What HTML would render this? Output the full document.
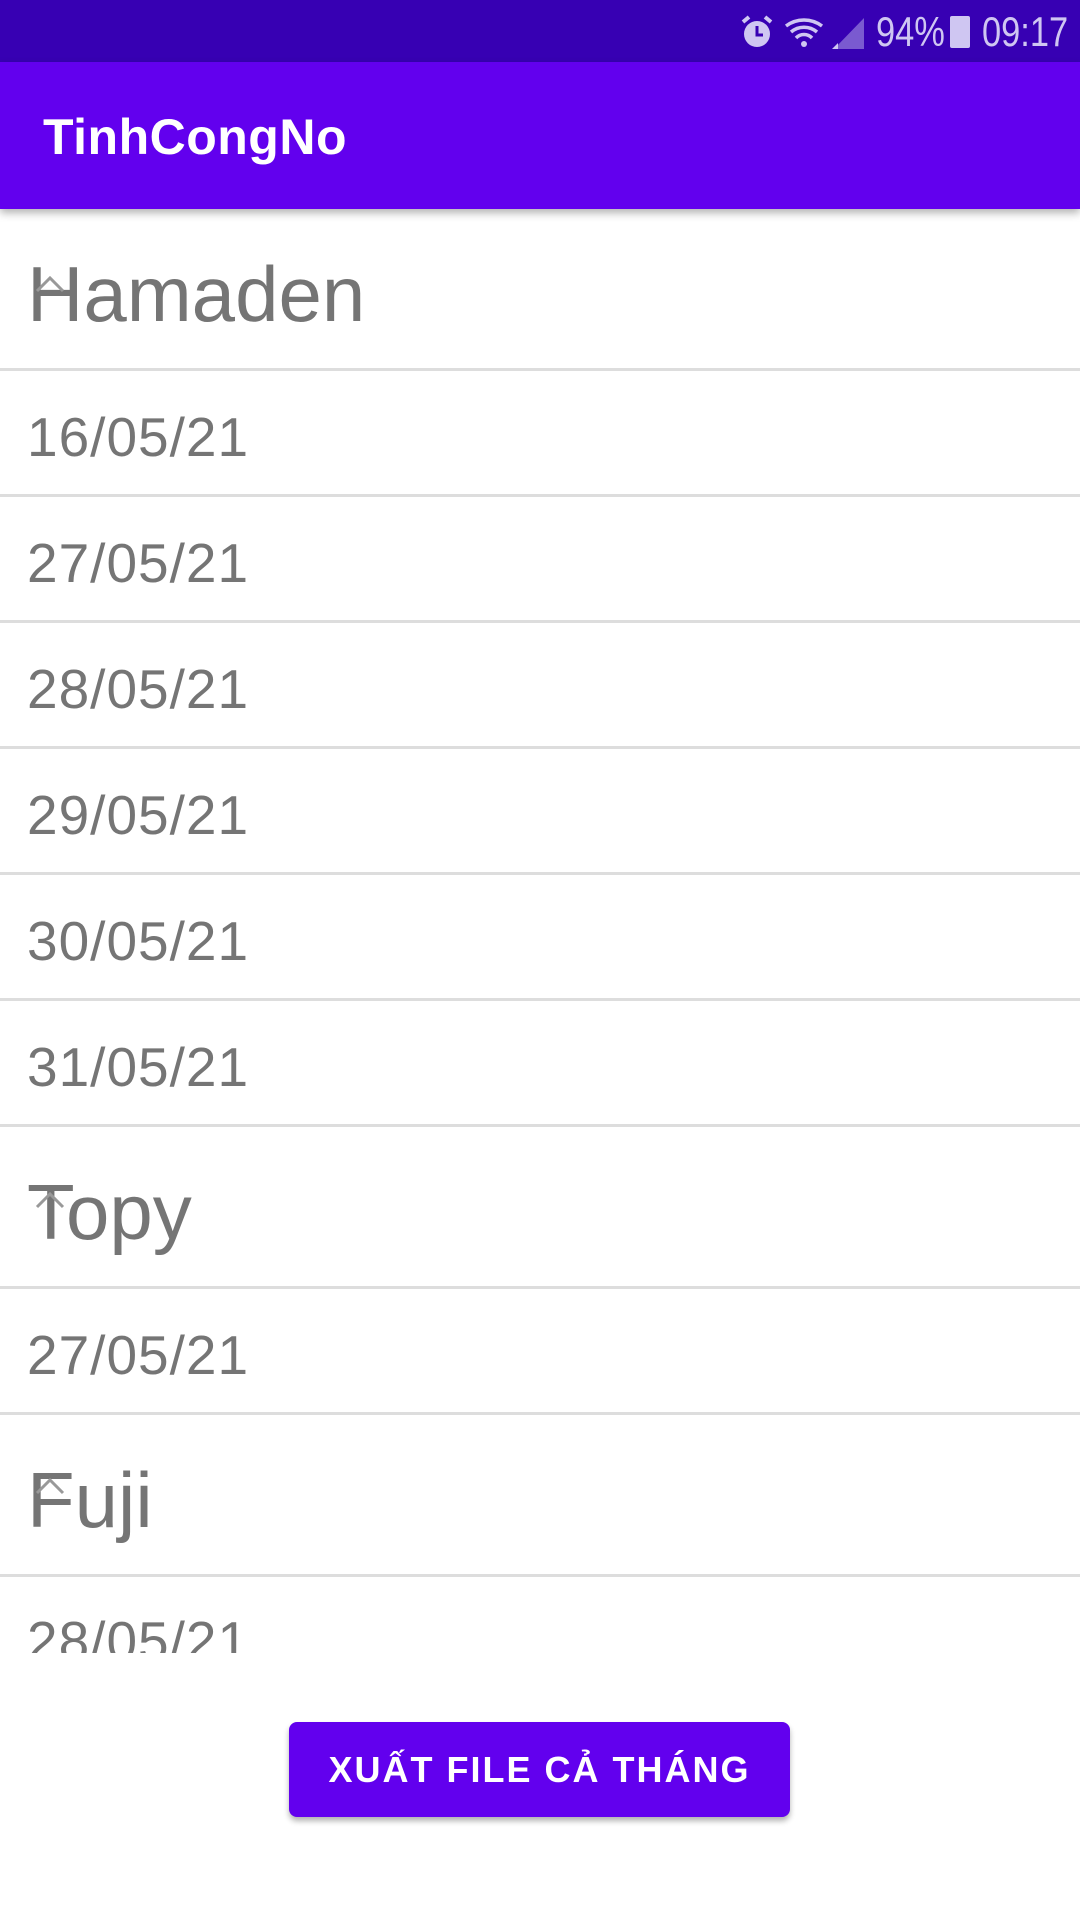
<!DOCTYPE html>
<html><head><meta charset="utf-8"><style>
*{margin:0;padding:0;box-sizing:border-box}
body{width:1080px;height:1920px;background:#fff;font-family:"Liberation Sans",sans-serif;position:relative;overflow:hidden}
.sb{position:absolute;left:0;top:0;width:1080px;height:62px;background:#3700b3}
.ab{position:absolute;left:0;top:62px;width:1080px;height:147px;background:#6200ee;box-shadow:0 4px 8px rgba(0,0,0,.3);z-index:2}
.ab span{position:absolute;left:43px;top:46px;font-size:50px;color:#fff;font-weight:bold;letter-spacing:0.5px}
.row{position:absolute;left:0;width:1080px;border-bottom:3px solid #ddd;color:#757575}
.h{height:162px}
.h span{position:absolute;left:27px;top:40px;font-size:78px}
.d{height:126px}
.d span{position:absolute;left:27px;top:34px;font-size:55px;letter-spacing:1px}
.st{position:absolute;top:8px;color:#cfc6f2;font-size:42px;transform:scaleX(.82);transform-origin:left top}
.btn{position:absolute;left:289px;top:1722px;width:501px;height:95px;background:#6200ee;border-radius:8px;box-shadow:0 4px 6px rgba(0,0,0,.3);color:#fff;font-size:36px;font-weight:bold;letter-spacing:2px;text-align:center;line-height:95px}
</style></head><body>
<div class="sb">
<svg style="position:absolute;left:740px;top:14px" width="34" height="36" viewBox="0 0 34 36"><circle cx="17" cy="20" r="13" fill="#cfc6f2"/><path d="M17 12v9h6" stroke="#3700b3" stroke-width="3" fill="none"/><path d="M3 8l6-5M31 8l-6-5" stroke="#cfc6f2" stroke-width="4"/></svg>
<svg style="position:absolute;left:784px;top:14px" width="80" height="36" viewBox="0 0 80 36"><path d="M2 12a30 30 0 0 1 36 0M7 18a20 20 0 0 1 26 0M12 24a11 11 0 0 1 16 0" stroke="#cfc6f2" stroke-width="3.5" fill="none"/><circle cx="20" cy="30" r="3" fill="#cfc6f2"/><path d="M50 35L80 4V35Z" fill="#7a5ad0"/><path d="M48 35l6-6v6z" fill="#cfc6f2"/></svg>
<div class="st" style="left:876px">94%</div>
<div style="position:absolute;left:950px;top:16px;width:20px;height:32px;background:#cfc6f2;border-radius:2px"></div>
<div class="st" style="left:982px">09:17</div>
</div>
<div class="ab"><span>TinhCongNo</span></div>

<div class="row h" style="top:209px"><span>Hamaden</span></div>
<div class="row d" style="top:371px"><span>16/05/21</span></div>
<div class="row d" style="top:497px"><span>27/05/21</span></div>
<div class="row d" style="top:623px"><span>28/05/21</span></div>
<div class="row d" style="top:749px"><span>29/05/21</span></div>
<div class="row d" style="top:875px"><span>30/05/21</span></div>
<div class="row d" style="top:1001px"><span>31/05/21</span></div>
<div class="row h" style="top:1127px"><span>Topy</span></div>
<div class="row d" style="top:1289px"><span>27/05/21</span></div>
<div class="row h" style="top:1415px"><span>Fuji</span></div>
<div style="position:absolute;left:0;top:1577px;width:1080px;height:76px;overflow:hidden;color:#757575"><span style="position:absolute;left:27px;top:32px;font-size:55px;letter-spacing:1px">28/05/21</span></div>

<svg style="position:absolute;left:34px;top:274px" width="32" height="20" viewBox="0 0 32 20"><path d="M3 17L16 4L29 17" stroke="#999" stroke-width="3" fill="none"/></svg>
<svg style="position:absolute;left:34px;top:1190px" width="32" height="20" viewBox="0 0 32 20"><path d="M3 17L16 4L29 17" stroke="#999" stroke-width="3" fill="none"/></svg>
<svg style="position:absolute;left:34px;top:1476px" width="32" height="20" viewBox="0 0 32 20"><path d="M3 17L16 4L29 17" stroke="#999" stroke-width="3" fill="none"/></svg>

<div class="btn">XUẤT FILE CẢ THÁNG</div>
</body></html>
